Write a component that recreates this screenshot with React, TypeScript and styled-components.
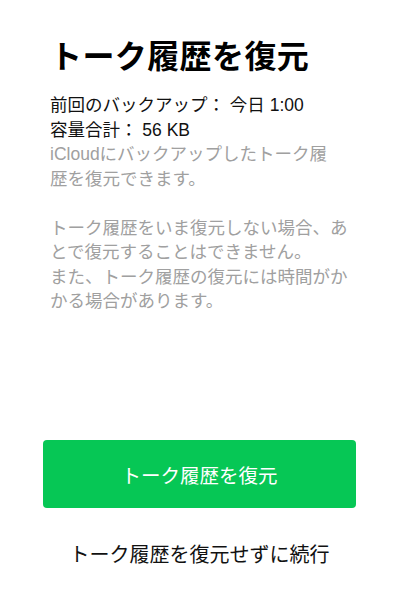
import React from 'react'
import styled, { createGlobalStyle } from 'styled-components'

const GlobalStyle = createGlobalStyle`
  html, body {
    margin: 0;
    padding: 0;
    background: #ffffff;
    font-family: 'Liberation Sans', 'Noto Sans CJK JP', sans-serif;
  }
`

const Screen = styled.div`
  display: flex;
  flex-direction: column;
  height: 600px;
  width: 400px;
  background: #ffffff;
`

const Content = styled.div`
  display: flex;
  flex-direction: column;
  padding: 37px 50px 0 50px;
`

const Title = styled.h1`
  margin: 0 0 16px 0;
  font-size: 32px;
  line-height: 40px;
  font-weight: 700;
  color: #000000;
  letter-spacing: 0.4px;
`

const InfoLine = styled.div`
  font-size: 17.5px;
  line-height: 24.5px;
  color: #111111;
`

const Note = styled.p`
  margin: 0;
  font-size: 17.5px;
  line-height: 24.5px;
  color: #a0a0a0;
  white-space: pre-line;
`

const Actions = styled.div`
  margin-top: auto;
  display: flex;
  flex-direction: column;
  align-items: center;
  padding: 0 44px 30px 43px;
  gap: 32px;
`

const PrimaryButton = styled.button`
  width: 100%;
  height: 68px;
  border: none;
  border-radius: 4px;
  background: #06c755;
  color: #ffffff;
  font-family: inherit;
  font-size: 19.5px;
  cursor: pointer;
`

const SkipLink = styled.button`
  border: none;
  background: none;
  padding: 0;
  font-family: inherit;
  font-size: 20px;
  line-height: 30px;
  color: #111111;
  cursor: pointer;
`

export default function App() {
  return (
    <Screen>
      <GlobalStyle />
      <Content>
        <Title>トーク履歴を復元</Title>
        <InfoLine>前回のバックアップ： 今日 1:00</InfoLine>
        <InfoLine>容量合計： 56 KB</InfoLine>
        <Note>
          {'iCloudにバックアップしたトーク履\n歴を復元できます。\n\nトーク履歴をいま復元しない場合、あとで復元することはできません。\nまた、トーク履歴の復元には時間がかかる場合があります。'}
        </Note>
      </Content>
      <Actions>
        <PrimaryButton>トーク履歴を復元</PrimaryButton>
        <SkipLink>トーク履歴を復元せずに続行</SkipLink>
      </Actions>
    </Screen>
  )
}
